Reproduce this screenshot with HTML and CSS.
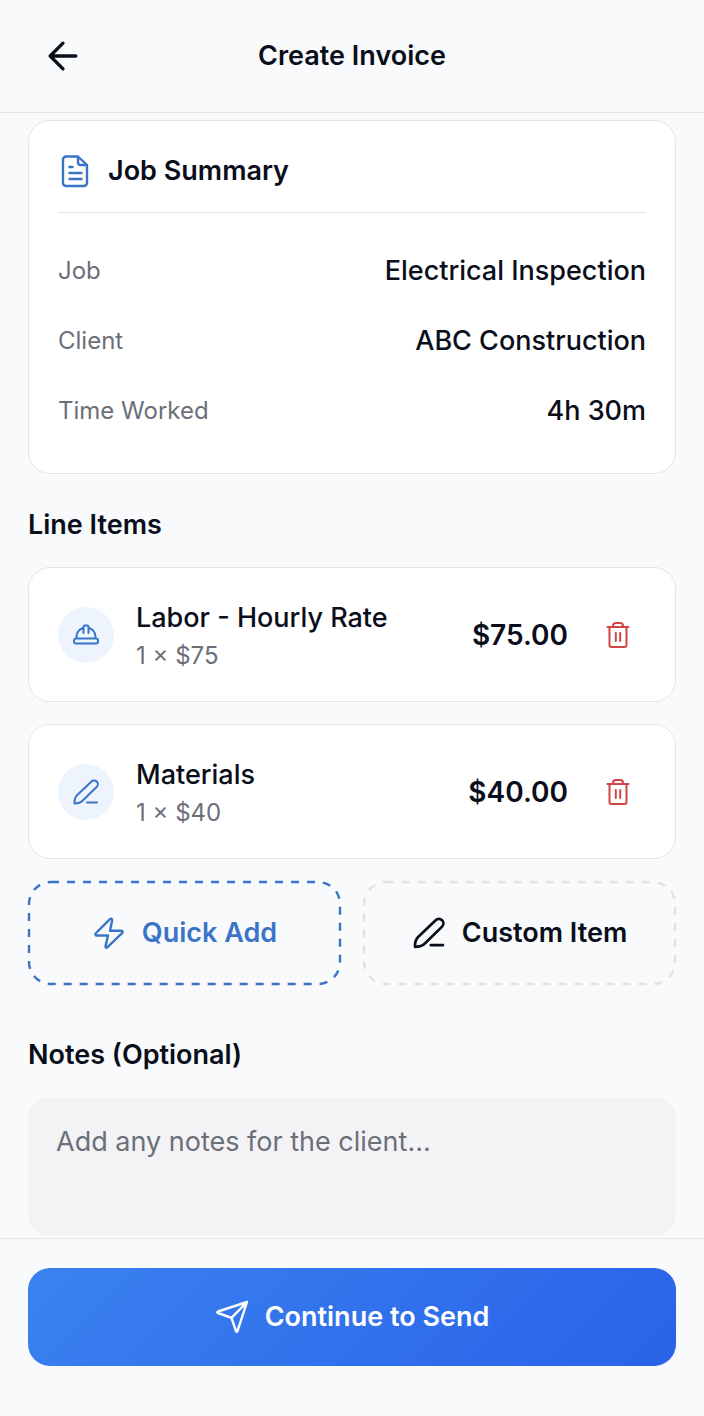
FILE: index.html
```html
<!DOCTYPE html>
<html lang="en">
<head>
    <meta charset="UTF-8">
    <meta name="viewport" content="width=device-width, initial-scale=1.0">
    <title>Create Invoice</title>
    <link rel="stylesheet" href="styles.css">
</head>
<body>
    <header class="topbar">
        <button type="button" class="back-btn" aria-label="Back">
            <svg class="icon-back" viewBox="0 0 24 24"><path d="M12 19l-7-7 7-7M19 12H5"/></svg>
        </button>
        <h1>Create Invoice</h1>
    </header>

    <main>
        <section class="card summary">
            <h2 class="summary-title">
                <svg class="icon" viewBox="0 0 34 34"><path d="M8 2.500h12l9 8.500V29a3 3 0 0 1-3 3H8a3 3 0 0 1-3-3V5.500a3 3 0 0 1 3-3zM20 3v5.500a2.500 2.500 0 0 0 2.500 2.500h6M11.500 13h3M11.500 19h12M11.500 25h12"/></svg>
                Job Summary
            </h2>
            <dl>
                <div class="row">
                    <dt>Job</dt>
                    <dd>Electrical Inspection</dd>
                </div>
                <div class="row">
                    <dt>Client</dt>
                    <dd>ABC Construction</dd>
                </div>
                <div class="row">
                    <dt>Time Worked</dt>
                    <dd>4h 30m</dd>
                </div>
            </dl>
        </section>

        <h2 class="section-title">Line Items</h2>
        <ul class="items">
            <li class="card item">
                <span class="item-icon">
                    <svg class="icon-small" viewBox="0 0 28 28"><path d="M4 17.500h20a2 2 0 0 1 2 2v1a2 2 0 0 1-2 2H4a2 2 0 0 1-2-2v-1a2 2 0 0 1 2-2zM4.500 17v-1.500a9.500 9.500 0 0 1 6.500-8.500M23.500 17v-1.500a9.500 9.500 0 0 0-6.500-8.500M11.500 12V6a1.500 1.500 0 0 1 1.500-1.500h2a1.500 1.500 0 0 1 1.500 1.500v6"/></svg>
                </span>
                <div class="item-text">
                    <h3>Labor - Hourly Rate</h3>
                    <p>1 × $75</p>
                </div>
                <span class="price">$75.00</span>
                <button type="button" class="delete-btn" aria-label="Delete Labor - Hourly Rate">
                    <svg class="icon-trash" viewBox="0 0 30 30"><path d="M4.500 7h21M10 7V6a3 3 0 0 1 3-3h4a3 3 0 0 1 3 3v1M6.500 7V25a2 2 0 0 0 2 2h13a2 2 0 0 0 2-2V7M12.800 13v8M17.200 13v8"/></svg>
                </button>
            </li>
            <li class="card item">
                <span class="item-icon">
                    <svg class="icon-small" viewBox="0 0 28 28"><path d="M2.500 25.500c-.2-4 .4-6 2.500-8.200L19.500 3.500a3.700 3.700 0 0 1 5.300 5.200L10.800 22.500c-2.200 2.200-4.300 3-8.300 3zM15 24.500h10"/></svg>
                </span>
                <div class="item-text">
                    <h3>Materials</h3>
                    <p>1 × $40</p>
                </div>
                <span class="price">$40.00</span>
                <button type="button" class="delete-btn" aria-label="Delete Materials">
                    <svg class="icon-trash" viewBox="0 0 30 30"><path d="M4.500 7h21M10 7V6a3 3 0 0 1 3-3h4a3 3 0 0 1 3 3v1M6.500 7V25a2 2 0 0 0 2 2h13a2 2 0 0 0 2-2V7M12.800 13v8M17.200 13v8"/></svg>
                </button>
            </li>
        </ul>

        <div class="actions">
            <button type="button" class="add-btn quick-add">
                <svg class="dashes"><rect width="100%" height="100%" rx="22"/></svg>
                <svg class="icon" viewBox="0 0 34 34"><path d="M18 3.200L4 17c-1.200 1.300-.7 2.500 1 2.500h11l-2.500 10.700c-.2 1.600 1 2.100 2 1L30 17.200c1.200-1.400.7-2.500-1-2.500H18L20.200 4.200c.1-1.500-1.200-2-2.200-1z"/></svg>
                Quick Add
            </button>
            <button type="button" class="add-btn custom-item">
                <svg class="dashes"><rect width="100%" height="100%" rx="22"/></svg>
                <svg class="icon icon-pen" viewBox="0 0 28 28"><path d="M2.500 25.500c-.2-4 .4-6 2.500-8.200L19.500 3.500a3.700 3.700 0 0 1 5.300 5.200L10.800 22.500c-2.200 2.200-4.300 3-8.300 3zM15.500 24h10"/></svg>
                Custom Item
            </button>
        </div>

        <label class="section-title" for="notes">Notes (Optional)</label>
        <textarea id="notes" placeholder="Add any notes for the client..."></textarea>
    </main>

    <footer class="bottombar">
        <button type="button" class="send-btn">
            <svg class="icon" viewBox="0 0 34 34"><path d="M32 2L3 11.500c-1 .4-1 1 0 1.500l13.500 4.800L21 31c.4 1 1.200 1 1.500 0zM16.500 17.800L32 2"/></svg>
            Continue to Send
        </button>
    </footer>
</body>
</html>
```
FILE: styles.css
```css
* {
    box-sizing: border-box;
}

body {
    font-family: Inter, "Liberation Sans", sans-serif;
    margin: 0;
    min-height: 100vh;
    display: flex;
    flex-direction: column;
    background-color: #f9fafb;
    color: #0a0e1a;
    font-size: 27px;
    line-height: 40px;
}

h1, h2, h3, p, ul, dl, dd {
    margin: 0;
    padding: 0;
    font-size: inherit;
}

button {
    font: inherit;
    color: inherit;
    border: none;
    background: none;
    padding: 0;
    cursor: pointer;
}

svg {
    display: block;
    flex: none;
    fill: none;
    stroke: currentColor;
    stroke-width: 2;
    stroke-linecap: round;
    stroke-linejoin: round;
}

.icon {
    width: 34px;
    height: 34px;
    stroke-width: 2.4;
}

.icon-pen {
    stroke-width: 2.2;
}

.icon-small {
    width: 28px;
    height: 28px;
}

.icon-trash {
    width: 30px;
    height: 30px;
}

.icon-back {
    width: 44px;
    height: 44px;
    stroke-width: 1.8;
}

.topbar {
    position: sticky;
    top: 0;
    z-index: 1;
    display: grid;
    grid-template-columns: 44px 1fr 44px;
    align-items: center;
    padding: 34px 41px;
    background-color: #f9fafb;
    border-bottom: 1px solid #e3e5e8;
}

.topbar h1 {
    text-align: center;
    font-weight: 600;
}

main {
    flex: 1;
    padding: 7px 28px 2px;
}

.card {
    background-color: white;
    border: 1px solid #e3e5e8;
    border-radius: 22px;
}

.summary {
    padding: 30px 29px 27px;
}

.summary-title {
    display: flex;
    align-items: center;
    gap: 16px;
    padding-bottom: 21px;
    margin-bottom: 23px;
    border-bottom: 1px solid #e3e5e8;
    font-weight: 600;
}

.summary-title .icon {
    color: #3a74c8;
}

.row {
    display: flex;
    justify-content: space-between;
    align-items: center;
    height: 70px;
}

.row dt {
    font-size: 24px;
    color: #6b7078;
}

.row dd {
    font-weight: 500;
}

.section-title {
    display: block;
    margin: 31px 0 22px;
    font-weight: 600;
}

.items {
    display: grid;
    gap: 22px;
    list-style: none;
}

.item {
    display: flex;
    align-items: center;
    padding: 27px 29px 26px;
}

.item-icon {
    display: grid;
    place-items: center;
    width: 56px;
    height: 56px;
    margin-right: 22px;
    border-radius: 50%;
    background-color: #eef4fe;
    color: #3a74c8;
}

.item-text {
    flex: 1;
    padding-top: 4px;
    line-height: 38px;
}

.item-text h3 {
    font-weight: 500;
}

.item-text p {
    font-size: 24px;
    color: #6b7078;
}

.price {
    font-size: 28px;
    font-weight: 600;
}

.delete-btn {
    margin-left: 35px;
    padding: 0 13px 0 0;
    color: #d04545;
}

.actions {
    display: grid;
    grid-template-columns: 1fr 1fr;
    gap: 22px;
    margin: 22px 0 50px;
}

.add-btn {
    position: relative;
    display: flex;
    justify-content: center;
    align-items: center;
    gap: 16px;
    height: 104px;
    font-weight: 600;
}

.dashes {
    position: absolute;
    top: 1px;
    left: 1px;
    width: calc(100% - 2px);
    height: calc(100% - 2px);
    overflow: visible;
    stroke-width: 2.4;
    stroke-dasharray: 8 8;
    stroke-linecap: butt;
}

.quick-add {
    color: #3a74c8;
}

.custom-item .dashes {
    stroke: #e1e3e6;
}

textarea {
    display: block;
    width: 100%;
    height: 139px;
    padding: 25px 28px;
    border: none;
    border-radius: 22px;
    background-color: #f3f3f5;
    font: inherit;
    color: inherit;
    resize: none;
}

textarea::placeholder {
    color: #6b7078;
}

.bottombar {
    position: sticky;
    bottom: 0;
    padding: 29px 28px 50px;
    background-color: #f9fafb;
    border-top: 1px solid #e3e5e8;
}

.send-btn {
    display: flex;
    justify-content: center;
    align-items: center;
    gap: 16px;
    width: 100%;
    height: 98px;
    border-radius: 22px;
    background: linear-gradient(135deg, #3b82f0, #2962e8);
    color: white;
    font-weight: 600;
}
```
